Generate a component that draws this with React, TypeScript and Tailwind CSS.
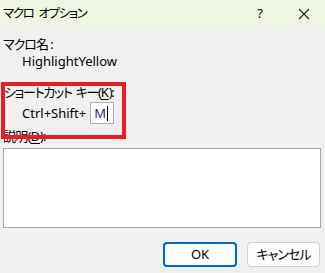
const font = "[font-family:'Noto_Sans','Noto_Sans_CJK_JP',sans-serif] [font-feature-settings:'palt']";

const App = () => {
  return (
    <div className={`w-[325px] h-[273px] bg-[#f0f0f0] text-[13px] text-black overflow-hidden ${font}`}>
      {/* title bar */}
      <div className="h-[28px] bg-[#eef5e2] flex items-center pl-[3px] pr-[14px]">
        <span className="text-[12.5px] tracking-[-1.4px]">マクロ</span>
        <span className="ml-[5px] text-[12.5px] tracking-[-1.4px]">オプション</span>
        <span className="ml-auto text-[13px] w-[10px] text-center">?</span>
        <span className="ml-[32px] w-[14px] flex justify-center">
          <svg width="12" height="12" viewBox="0 0 12 12" fill="none" stroke="#222" strokeWidth="1.1">
            <path d="M1 1 L11 11 M11 1 L1 11" />
          </svg>
        </span>
      </div>

      <div className="relative px-[3px]">
        <div className="mt-[8px] h-[16px] leading-[16px] tracking-[-1px]">マクロ名 :</div>
        <div className="mt-[1px] h-[16px] leading-[16px] pl-[19px]">HighlightYellow</div>

        <div className="mt-[15px] h-[16px] leading-[16px] pl-[1px] flex tracking-[-1.3px]">
          <span>ショートカット</span>
          <span className="ml-[4px]">
            キー(<span className="underline underline-offset-2 tracking-normal">K</span>):
          </span>
        </div>
        <div className="mt-[2px] flex items-center pl-[19px]">
          <span className="leading-[16px]">Ctrl+Shift+</span>
          <div className="ml-[4px] w-[24px] h-[22px] bg-white border border-[#adadad] flex items-center pl-[3px]">
            <span className="leading-[16px] text-[#2a1a8a]">M</span>
            <span className="w-[1px] h-[15px] bg-black ml-[1px]" />
          </div>
        </div>

        <div className="mt-[4px] h-[16px] leading-[16px] tracking-[-0.8px]">
          説明(<span className="underline underline-offset-2 tracking-normal">D</span>):
        </div>
        <div className="mt-[4px] w-[318px] h-[80px] bg-white border border-[#a8a8a8]" />

        <div className="mt-[14px] flex justify-end gap-[10px] pr-[2px]">
          <button className="w-[74px] h-[25px] rounded-[4px] bg-[#fdfdfd] border-2 border-[#0067c0] text-[13px]">OK</button>
          <button className="w-[73px] h-[25px] rounded-[4px] bg-[#fdfdfd] border border-[#d0d0d0] text-[13px] tracking-[-1px]">キャンセル</button>
        </div>

        {/* red annotation box */}
        <div className="absolute left-[1px] top-[46px] w-[125px] h-[57px] border-[4px] border-[#e81c24] pointer-events-none" />
      </div>
    </div>
  );
};

export default App;
